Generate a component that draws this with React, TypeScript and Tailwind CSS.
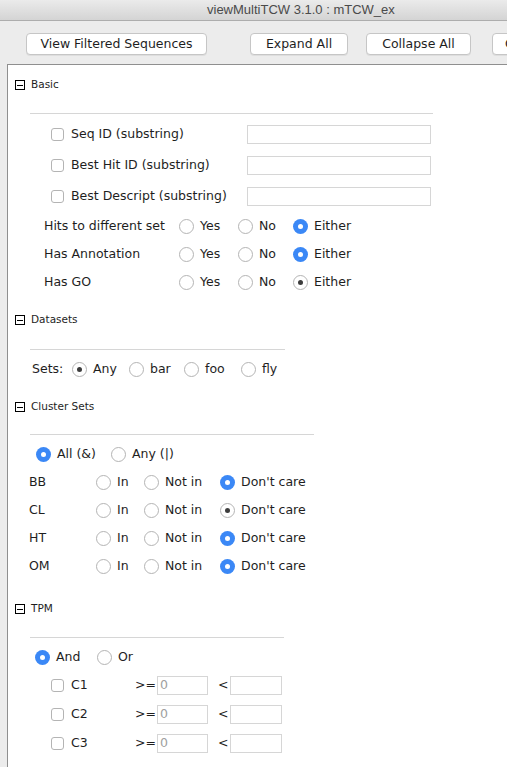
import React from "react";

type RState = "off" | "blue" | "dot";

function Radio({ state }: { state: RState }) {
  if (state === "blue") {
    return (
      <span className="w-[15px] h-[15px] rounded-full bg-[#3b88f6] flex items-center justify-center shrink-0">
        <span className="w-[5px] h-[5px] rounded-full bg-white" />
      </span>
    );
  }
  return (
    <span className="w-[15px] h-[15px] rounded-full border border-[#b4b4b4] bg-white flex items-center justify-center shrink-0">
      {state === "dot" && <span className="w-[5px] h-[5px] rounded-full bg-[#3c3c3c]" />}
    </span>
  );
}

function RadioItem({
  state,
  label,
  className = "",
}: {
  state: RState;
  label: string;
  className?: string;
}) {
  return (
    <div className={`flex items-center gap-[6px] shrink-0 ${className}`}>
      <Radio state={state} />
      <span>{label}</span>
    </div>
  );
}

function Checkbox() {
  return <span className="w-[13px] h-[13px] rounded-[3px] border border-[#b4b4b4] bg-white shrink-0" />;
}

function SectionHeader({ title, className = "" }: { title: string; className?: string }) {
  return (
    <div className={`flex items-center h-[14px] pl-[7px] text-[10.5px] ${className}`}>
      <span className="w-[10px] h-[10px] border border-black flex items-center justify-center shrink-0">
        <span className="w-[6px] h-px bg-black" />
      </span>
      <span className="ml-[6px]">{title}</span>
    </div>
  );
}

function Sep({ className }: { className: string }) {
  return <div className={`ml-[22px] h-px bg-[#d6d6d6] ${className}`} />;
}

function TextBox({ className, value }: { className: string; value?: string }) {
  return (
    <div className={`h-[19px] border border-[#d6d6d6] bg-white flex items-center pl-[2px] text-[#a0a0a0] ${className}`}>
      {value}
    </div>
  );
}

function Button({ label, className }: { label: string; className: string }) {
  return (
    <div
      className={`h-[22px] rounded-[4px] border border-[#c6c6c6] bg-white shadow-[0_1px_0_rgba(0,0,0,0.06)] flex items-center justify-center shrink-0 whitespace-nowrap overflow-hidden ${className}`}
    >
      {label}
    </div>
  );
}

const basicText = ["Seq ID (substring)", "Best Hit ID (substring)", "Best Descript (substring)"];

const basicRadio: [string, RState][] = [
  ["Hits to different set", "blue"],
  ["Has Annotation", "blue"],
  ["Has GO", "dot"],
];

const clusters: [string, RState][] = [
  ["BB", "blue"],
  ["CL", "dot"],
  ["HT", "blue"],
  ["OM", "blue"],
];

export default function App() {
  return (
    <div className="w-[507px] h-[767px] overflow-hidden bg-[#ececec] text-[12.5px] text-[#1e1e1e] font-['Lucida_Grande','DejaVu_Sans',sans-serif] flex flex-col">
      {/* title bar */}
      <div className="h-[21px] shrink-0 border-b border-[#adadad] bg-gradient-to-b from-[#ebebeb] to-[#d4d4d4] flex items-center pl-[207px] text-[13px] text-[#4a4a4a] font-['Liberation_Sans',sans-serif]">
        viewMultiTCW 3.1.0 : mTCW_ex
      </div>

      {/* toolbar */}
      <div className="h-[43px] shrink-0 flex items-start pt-[12px] pl-[26px]">
        <Button label="View Filtered Sequences" className="w-[181px]" />
        <Button label="Expand All" className="w-[98px] ml-[43px]" />
        <Button label="Collapse All" className="w-[105px] ml-[18px]" />
        <Button label="Clear" className="w-[100px] ml-[21px] justify-start pl-[12px]" />
      </div>

      {/* filter panel */}
      <div className="flex-1 ml-[7px] border-l border-t border-[#8f8f8f] bg-white flex flex-col">
        <SectionHeader title="Basic" className="mt-[13px]" />
        <Sep className="w-[403px] mt-[21px]" />
        <div className="mt-[5px] flex flex-col">
          {basicText.map((t) => (
            <div key={t} className="h-[31px] flex items-center pl-[43px]">
              <div className="w-[196px] flex items-center gap-[7px]">
                <Checkbox />
                <span>{t}</span>
              </div>
              <TextBox className="w-[184px]" />
            </div>
          ))}
          {basicRadio.map(([t, s]) => (
            <div key={t} className="h-[28px] flex items-center pl-[36px]">
              <span className="w-[135px] shrink-0">{t}</span>
              <RadioItem state="off" label="Yes" className="w-[59px]" />
              <RadioItem state="off" label="No" className="w-[55px]" />
              <RadioItem state={s} label="Either" />
            </div>
          ))}
        </div>

        <SectionHeader title="Datasets" className="mt-[17px]" />
        <Sep className="w-[255px] mt-[22px]" />
        <div className="mt-[5px] h-[28px] flex items-center pl-[24px]">
          <span className="w-[40px] shrink-0">Sets:</span>
          <RadioItem state="dot" label="Any" className="w-[57px]" />
          <RadioItem state="off" label="bar" className="w-[55px]" />
          <RadioItem state="off" label="foo" className="w-[57px]" />
          <RadioItem state="off" label="fly" />
        </div>

        <SectionHeader title="Cluster Sets" className="mt-[17px]" />
        <Sep className="w-[284px] mt-[20px]" />
        <div className="mt-[5px] flex flex-col">
          <div className="h-[28px] flex items-center pl-[28px]">
            <RadioItem state="blue" label="All (&)" className="w-[75px]" />
            <RadioItem state="off" label="Any (|)" />
          </div>
          {clusters.map(([c, s]) => (
            <div key={c} className="h-[28px] flex items-center pl-[21px]">
              <span className="w-[67px] shrink-0">{c}</span>
              <RadioItem state="off" label="In" className="w-[48px]" />
              <RadioItem state="off" label="Not in" className="w-[76px]" />
              <RadioItem state={s} label="Don't care" />
            </div>
          ))}
        </div>

        <SectionHeader title="TPM" className="mt-[22px]" />
        <Sep className="w-[254px] mt-[21px]" />
        <div className="mt-[5px] flex flex-col">
          <div className="h-[28px] flex items-center pl-[27px]">
            <RadioItem state="blue" label="And" className="w-[62px]" />
            <RadioItem state="off" label="Or" />
          </div>
          {["C1", "C2", "C3"].map((c) => (
            <div key={c} className="h-[29px] flex items-center pl-[43px]">
              <div className="w-[84px] shrink-0 flex items-center gap-[7px]">
                <Checkbox />
                <span>{c}</span>
              </div>
              <span className="w-[22px] shrink-0">&gt;=</span>
              <TextBox className="w-[51px]" value="0" />
              <span className="w-[22px] shrink-0 pl-[10px]">&lt;</span>
              <TextBox className="w-[52px]" />
            </div>
          ))}
        </div>
      </div>
    </div>
  );
}
